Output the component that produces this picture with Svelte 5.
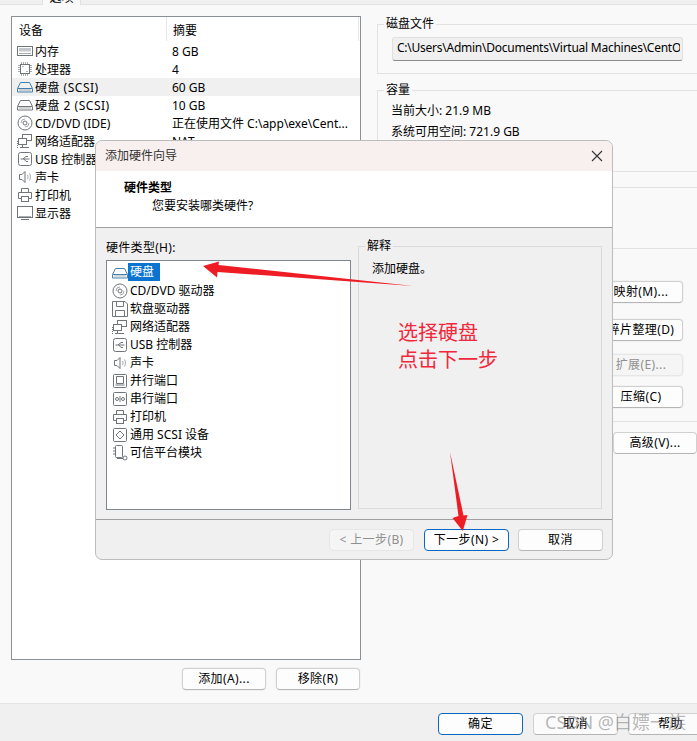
<script lang="ts">
  const devices = [
    { icon: 'memory', name: '内存', summary: '8 GB' },
    { icon: 'cpu', name: '处理器', summary: '4' },
    { icon: 'diskBlue', name: '硬盘 (SCSI)', summary: '60 GB', selected: true, spaced: true },
    { icon: 'disk', name: '硬盘 2 (SCSI)', summary: '10 GB', spaced: true },
    { icon: 'cd', name: 'CD/DVD (IDE)', summary: '正在使用文件 C:\\app\\exe\\Cent...' },
    { icon: 'net', name: '网络适配器', summary: 'NAT' },
    { icon: 'usb', name: 'USB 控制器', summary: '存在' },
    { icon: 'sound', name: '声卡', summary: '自动检测' },
    { icon: 'printer', name: '打印机', summary: '存在' },
    { icon: 'display', name: '显示器', summary: '自动检测' }
  ];

  const hardware = [
    { icon: 'diskBlue', name: '硬盘', selected: true },
    { icon: 'cd', name: 'CD/DVD 驱动器' },
    { icon: 'floppy', name: '软盘驱动器' },
    { icon: 'net', name: '网络适配器' },
    { icon: 'usb', name: 'USB 控制器' },
    { icon: 'sound', name: '声卡' },
    { icon: 'parallel', name: '并行端口' },
    { icon: 'serial', name: '串行端口' },
    { icon: 'printer', name: '打印机' },
    { icon: 'scsi', name: '通用 SCSI 设备' },
    { icon: 'tpm', name: '可信平台模块' }
  ];
</script>

{#snippet icon(name)}
  <svg class="icon" class:blue={name === 'diskBlue'} viewBox="0 0 16 16" width="16" height="16" aria-hidden="true">
    {#if name === 'memory'}
      <rect x="0.500" y="3.500" width="15" height="9" />
      <rect x="2" y="5" width="12" height="3.500" class="fill" />
      <path d="M2 10.500h12" class="light" />
    {:else if name === 'cpu'}
      <rect x="3.500" y="3.500" width="9" height="9" />
      <path d="M4.500 1v2M6.500 1v2M8.500 1v2M10.500 1v2M4.500 13v2M6.500 13v2M8.500 13v2M10.500 13v2M1 4.500h2M1 6.500h2M1 8.500h2M1 10.500h2M13 4.500h2M13 6.500h2M13 8.500h2M13 10.500h2" class="light" />
      <path d="M5.500 5.500h1M9.500 10.500h1" />
    {:else if name === 'disk' || name === 'diskBlue'}
      <path d="M3.500 3.500h9l3 6v3.500h-15V9.500z" />
      <path d="M1 9.500h14" />
      <path d="M2 11h12" class="light" />
    {:else if name === 'cd'}
      <circle cx="8" cy="8" r="7" />
      <circle cx="8" cy="8" r="2" />
      <path d="M4 8a4 4 0 0 1 4-4M12 8a4 4 0 0 1-4 4" class="light" />
    {:else if name === 'net'}
      <rect x="5.500" y="1.500" width="9" height="6" />
      <rect x="1.500" y="5.500" width="8" height="6" class="paper" />
      <path d="M5.500 11.500v3M3 14.500h9" />
      <path d="M0.500 8v7" class="dots" />
    {:else if name === 'usb'}
      <rect x="1.500" y="1.500" width="13" height="13" rx="2" />
      <path d="M3.500 8h9M6 8l3-2.500h2M7 8l2 2.500h2" />
    {:else if name === 'sound'}
      <path d="M2.500 5.500h2.500l3-3v11l-3-3h-2.500z" />
      <path d="M10.500 6c.7 1.200.7 2.800 0 4M12.500 4.500c1.300 2 1.300 5 0 7" class="light" />
    {:else if name === 'printer'}
      <path d="M4.500 5.500v-4h7v4" />
      <path d="M4.500 11.500h-3v-6h13v6h-3" />
      <rect x="4.500" y="9.500" width="7" height="5" />
    {:else if name === 'display'}
      <rect x="0.500" y="1.500" width="15" height="11" />
      <path d="M2 11.500h12" class="light" />
      <path d="M4 14.500h8" />
    {:else if name === 'floppy'}
      <path d="M0.500 0.500h12.500l2.500 2.500v12.500h-15z" />
      <path d="M4.500 0.500v5h7v-5M3.500 15.500v-6h9v6" />
    {:else if name === 'parallel'}
      <rect x="1.500" y="1.500" width="13" height="13" rx="1" />
      <path d="M4.500 3.500h7v7h-7zM3.500 12h9" />
    {:else if name === 'serial'}
      <rect x="1.500" y="1.500" width="13" height="13" rx="1" />
      <circle cx="5" cy="8" r="1.500" />
      <circle cx="11" cy="8" r="1.500" />
      <path d="M8 5v6" />
    {:else if name === 'scsi'}
      <rect x="1.500" y="1.500" width="13" height="13" rx="1" />
      <path d="M8 4l4 4-4 4-4-4z" />
    {:else if name === 'tpm'}
      <rect x="3.500" y="0.500" width="7" height="12" rx="1" />
      <path d="M1 3h2M1 6h2M1 9h2" />
      <circle cx="13" cy="13" r="2" />
      <path d="M5 13.500h6" />
    {/if}
  </svg>
{/snippet}

<div class="window">
  <div class="tabs"><div class="tab">选项</div></div>

  <div class="main">
    <div class="left">
      <div class="devices">
        <div class="device-head">
          <span class="col-a">设备</span>
          <span class="col-b">摘要</span>
        </div>
        {#each devices as d}
          <div class="device-row" class:selected={d.selected}>
            <span class="col-a name" class:spaced={d.spaced}>{@render icon(d.icon)}{d.name}</span>
            <span class="col-b">{d.summary}</span>
          </div>
        {/each}
      </div>
      <div class="left-actions">
        <button type="button" class="btn wide">添加(A)...</button>
        <button type="button" class="btn wide">移除(R)</button>
      </div>
    </div>

    <div class="right">
      <fieldset class="group file">
        <legend>磁盘文件</legend>
        <div class="path"><div class="path-text">C:\Users\Admin\Documents\Virtual Machines\CentOS</div></div>
      </fieldset>
      <fieldset class="group capacity">
        <legend>容量</legend>
        <div class="info">当前大小: 21.9 MB</div>
        <div class="info">系统可用空间: 721.9 GB</div>
      </fieldset>
      <div class="rule second"></div>
      <div class="rule third"></div>
      <div class="tools">
        <button type="button" class="btn tool">映射(M)...</button>
        <button type="button" class="btn tool">碎片整理(D)</button>
        <button type="button" class="btn tool" disabled>扩展(E)...</button>
        <button type="button" class="btn tool">压缩(C)</button>
      </div>
      <div class="rule fourth"></div>
      <button type="button" class="btn advanced">高级(V)...</button>
    </div>
  </div>

  <div class="footer">
    <button type="button" class="btn foot primary">确定</button>
    <button type="button" class="btn foot">取消</button>
    <button type="button" class="btn foot">帮助</button>
  </div>

  <div class="dialog">
    <div class="title-bar">
      <span>添加硬件向导</span>
      <svg class="close" viewBox="0 0 12 12" width="12" height="12" aria-hidden="true">
        <path d="M1 1l10 10M11 1L1 11" />
      </svg>
    </div>
    <div class="dialog-head">
      <div class="head-title">硬件类型</div>
      <div class="head-sub">您要安装哪类硬件?</div>
    </div>
    <div class="dialog-body">
      <div class="picker">
        <div class="picker-label">硬件类型(H):</div>
        <div class="hardware">
          {#each hardware as h}
            <div class="hardware-row">
              {@render icon(h.icon)}<span class:picked={h.selected}>{h.name}</span>
            </div>
          {/each}
        </div>
      </div>
      <fieldset class="group explain">
        <legend>解释</legend>
        <div class="explain-text">添加硬盘。</div>
      </fieldset>
    </div>
    <div class="dialog-foot">
      <button type="button" class="btn step" disabled>&lt; 上一步(B)</button>
      <button type="button" class="btn step primary">下一步(N) &gt;</button>
      <button type="button" class="btn step">取消</button>
    </div>
  </div>

  <svg class="arrows" viewBox="0 0 697 741" width="697" height="741" aria-hidden="true">
    <polygon points="203,266 219,261.500 218.500,265 413,286 217.500,272 217,277.500" />
    <polygon points="450,452 458.500,516 452.500,518 462.800,531 467.500,515 463.500,515.500" />
  </svg>
  <div class="note">选择硬盘<br />点击下一步</div>
  <div class="watermark">CSDN @白嫖一族</div>
</div>

<style>
  :global(body) {
    margin: 0;
  }

  .window {
    position: relative;
    display: flex;
    flex-direction: column;
    width: 697px;
    height: 741px;
    overflow: hidden;
    background: #f9f9f9;
    color: #000;
    font-family: "Noto Sans", "Noto Sans CJK SC", sans-serif;
    font-size: 12px;
    line-height: 18px;
  }

  .tabs {
    display: flex;
    align-items: flex-end;
    flex: none;
    height: 4px;
    padding-left: 42px;
    background: #f0f0f0;
    border-bottom: 1px solid #e3e3e3;
  }

  .tab {
    box-sizing: border-box;
    display: flex;
    align-items: flex-end;
    justify-content: center;
    width: 39px;
    height: 5px;
    margin-bottom: -1px;
    overflow: hidden;
    background: #f9f9f9;
    border-left: 1px solid #e0e0e0;
    border-right: 1px solid #e0e0e0;
    line-height: 14px;
  }

  .main {
    display: flex;
    flex: 1;
    min-height: 0;
    padding: 11px 0 0 11px;
  }

  .left {
    flex: none;
    width: 351px;
  }

  .devices {
    box-sizing: border-box;
    width: 350px;
    height: 644px;
    background: #fff;
    border: 1px solid #8b9096;
  }

  .device-head {
    box-sizing: border-box;
    display: flex;
    height: 25px;
    align-items: center;
    margin-right: 1px;
    padding-top: 3px;
  }

  .device-head .col-b {
    align-self: stretch;
    display: flex;
    align-items: center;
    margin-top: -3px;
    padding-top: 3px;
    border-left: 1px solid #e5e5e5;
    border-right: 1px solid #e5e5e5;
    margin-bottom: 1px;
  }

  .col-a {
    box-sizing: border-box;
    flex: none;
    width: 154px;
    padding-left: 7px;
    white-space: nowrap;
  }

  .col-b {
    box-sizing: border-box;
    flex: 1;
    padding-left: 6px;
    white-space: nowrap;
  }

  .device-row {
    box-sizing: border-box;
    display: flex;
    height: 18px;
    padding-top: 2px;
    align-items: center;
  }

  .device-row .icon {
    margin-top: -2px;
  }

  .device-row .col-a {
    padding-left: 5px;
  }

  .device-row.selected {
    background: #f0f0f0;
  }

  .name {
    display: flex;
    align-items: center;
    gap: 2px;
  }

  .spaced {
    letter-spacing: 0.5px;
  }

  .icon {
    flex: none;
    fill: none;
    stroke: #70757a;
    stroke-width: 1;
  }

  .icon.blue {
    stroke: #3f7fae;
  }

  .icon .fill {
    fill: #c4c8cc;
    stroke: none;
  }

  .icon .light {
    stroke: #a8acb0;
  }

  .icon .paper {
    fill: #fff;
  }

  .icon .dots {
    stroke-dasharray: 1 1;
  }

  .left-actions {
    display: flex;
    justify-content: flex-end;
    gap: 10px;
    margin-top: 8px;
    padding-right: 2px;
  }

  .btn {
    box-sizing: border-box;
    padding: 0;
    background: #fdfdfd;
    border: 1px solid #d0d0d0;
    border-bottom-color: #b5b5b5;
    border-radius: 4px;
    color: #000;
    font: inherit;
    letter-spacing: 0.4px;
    line-height: 18px;
    text-align: center;
    white-space: nowrap;
  }

  .btn:disabled {
    background: #f5f5f5;
    border-color: #e6e6e6;
    color: #8f8f8f;
  }

  .btn.primary {
    border: 1px solid #0a67c0;
    background: #fdfdfd;
  }

  .wide {
    width: 84px;
    height: 22px;
    box-shadow: 0 0 0 1px #f2f2f2;
  }

  .right {
    flex: 1;
    min-width: 0;
    padding-left: 15px;
  }

  .group {
    box-sizing: border-box;
    min-width: 0;
    margin: 0;
    padding: 0;
    border: 1px solid #e2e2e2;
  }

  .group legend {
    margin-left: 6px;
    padding: 0 2px;
    line-height: 16px;
  }

  .file {
    height: 58px;
    border-right: 0;
  }

  .path {
    box-sizing: border-box;
    height: 24px;
    margin: 5px 14px 0 14px;
    padding: 1px 2px 0 4px;
    background: #f0f0f0;
    border: 1px solid #e0e0e0;
    border-bottom: 1px solid #8b8b8b;
    border-radius: 3px;
  }

  .path-text {
    overflow: hidden;
    letter-spacing: -0.25px;
    white-space: nowrap;
  }

  .capacity {
    height: 90px;
    margin-top: 8px;
    padding-top: 2px;
    border-right: 0;
  }

  .info {
    height: 21px;
    padding-left: 13px;
    line-height: 21px;
  }

  .rule {
    height: 1px;
    background: #e2e2e2;
  }

  .second {
    margin-top: 15px;
  }

  .third {
    margin-top: 60px;
  }

  .tools {
    display: flex;
    flex-direction: column;
    align-items: flex-end;
    padding-right: 14px;
  }

  .tool {
    width: 84px;
    height: 22px;
    box-shadow: 0 0 0 1px #f2f2f2;
  }

  .tool:nth-child(1) {
    margin-top: 32px;
  }

  .tool:nth-child(2) {
    margin-top: 16px;
  }

  .tool:nth-child(3) {
    margin-top: 13px;
  }

  .tool:nth-child(4) {
    margin-top: 10px;
  }

  .fourth {
    margin-top: 13px;
  }

  .advanced {
    display: block;
    width: 84px;
    height: 22px;
    margin: 10px 0 0 236px;
  }

  .footer {
    box-sizing: border-box;
    display: flex;
    flex: none;
    gap: 10px;
    height: 38px;
    padding: 9px 0 0 438px;
    background: #f0f0f0;
    border-top: 1px solid #e5e5e5;
  }

  .foot {
    flex: none;
    width: 85px;
    height: 22px;
    background: #fbfbfb;
  }

  .dialog {
    position: absolute;
    left: 95px;
    top: 140px;
    box-sizing: border-box;
    display: flex;
    flex-direction: column;
    width: 518px;
    height: 420px;
    overflow: hidden;
    background: #f0f0f0;
    border: 1px solid #bcbcbc;
    border-radius: 7px;
  }

  .title-bar {
    display: flex;
    flex: none;
    align-items: center;
    justify-content: space-between;
    height: 30px;
    padding: 0 9px;
    background: #f8f0ee;
    color: #333;
  }

  .close {
    fill: none;
    stroke: #333;
    stroke-width: 1.1;
  }

  .dialog-head {
    flex: none;
    box-sizing: border-box;
    height: 57px;
    padding: 8px 0 0 28px;
    background: #fff;
    border-bottom: 1px solid #a0a0a0;
  }

  .head-title {
    font-weight: 700;
  }

  .head-sub {
    padding-left: 28px;
  }

  .dialog-body {
    display: flex;
    flex: none;
    gap: 7px;
    box-sizing: border-box;
    height: 292px;
    padding: 10px 10px 0 10px;
    border-bottom: 1px solid #a0a0a0;
  }

  .picker {
    flex: none;
    width: 245px;
  }

  .picker-label {
    height: 22px;
    padding-top: 1px;
    box-sizing: border-box;
    letter-spacing: 0.3px;
  }

  .hardware {
    box-sizing: border-box;
    height: 250px;
    padding: 3px 0 0 5px;
    background: #fff;
    border: 1px solid #7f858c;
  }

  .hardware-row {
    display: flex;
    align-items: center;
    gap: 2px;
    height: 18px;
  }

  .picked {
    margin: 0 0 2px -2px;
    padding: 0 6px 0 2px;
    background: #0a74d0;
    color: #fff;
  }

  .explain {
    flex: 1;
    height: 271px;
    border-color: #dadada;
  }

  .explain-text {
    padding: 6px 0 0 13px;
  }

  .dialog-foot {
    display: flex;
    flex: 1;
    align-items: flex-start;
    justify-content: flex-end;
    gap: 9px;
    padding: 9px 9px 0 0;
  }

  .step {
    flex: none;
    width: 85px;
    height: 22px;
  }

  .step:first-child {
    margin-right: 1px;
  }

  .arrows {
    position: absolute;
    left: 0;
    top: 0;
    fill: #ee1c25;
    pointer-events: none;
  }

  .note {
    position: absolute;
    left: 398px;
    top: 319px;
    color: #f0283c;
    font-size: 20px;
    line-height: 27px;
  }

  .watermark {
    position: absolute;
    left: 545px;
    top: 710px;
    color: rgba(125, 125, 125, 0.55);
    font-size: 18px;
    line-height: 24px;
    white-space: nowrap;
  }
</style>
